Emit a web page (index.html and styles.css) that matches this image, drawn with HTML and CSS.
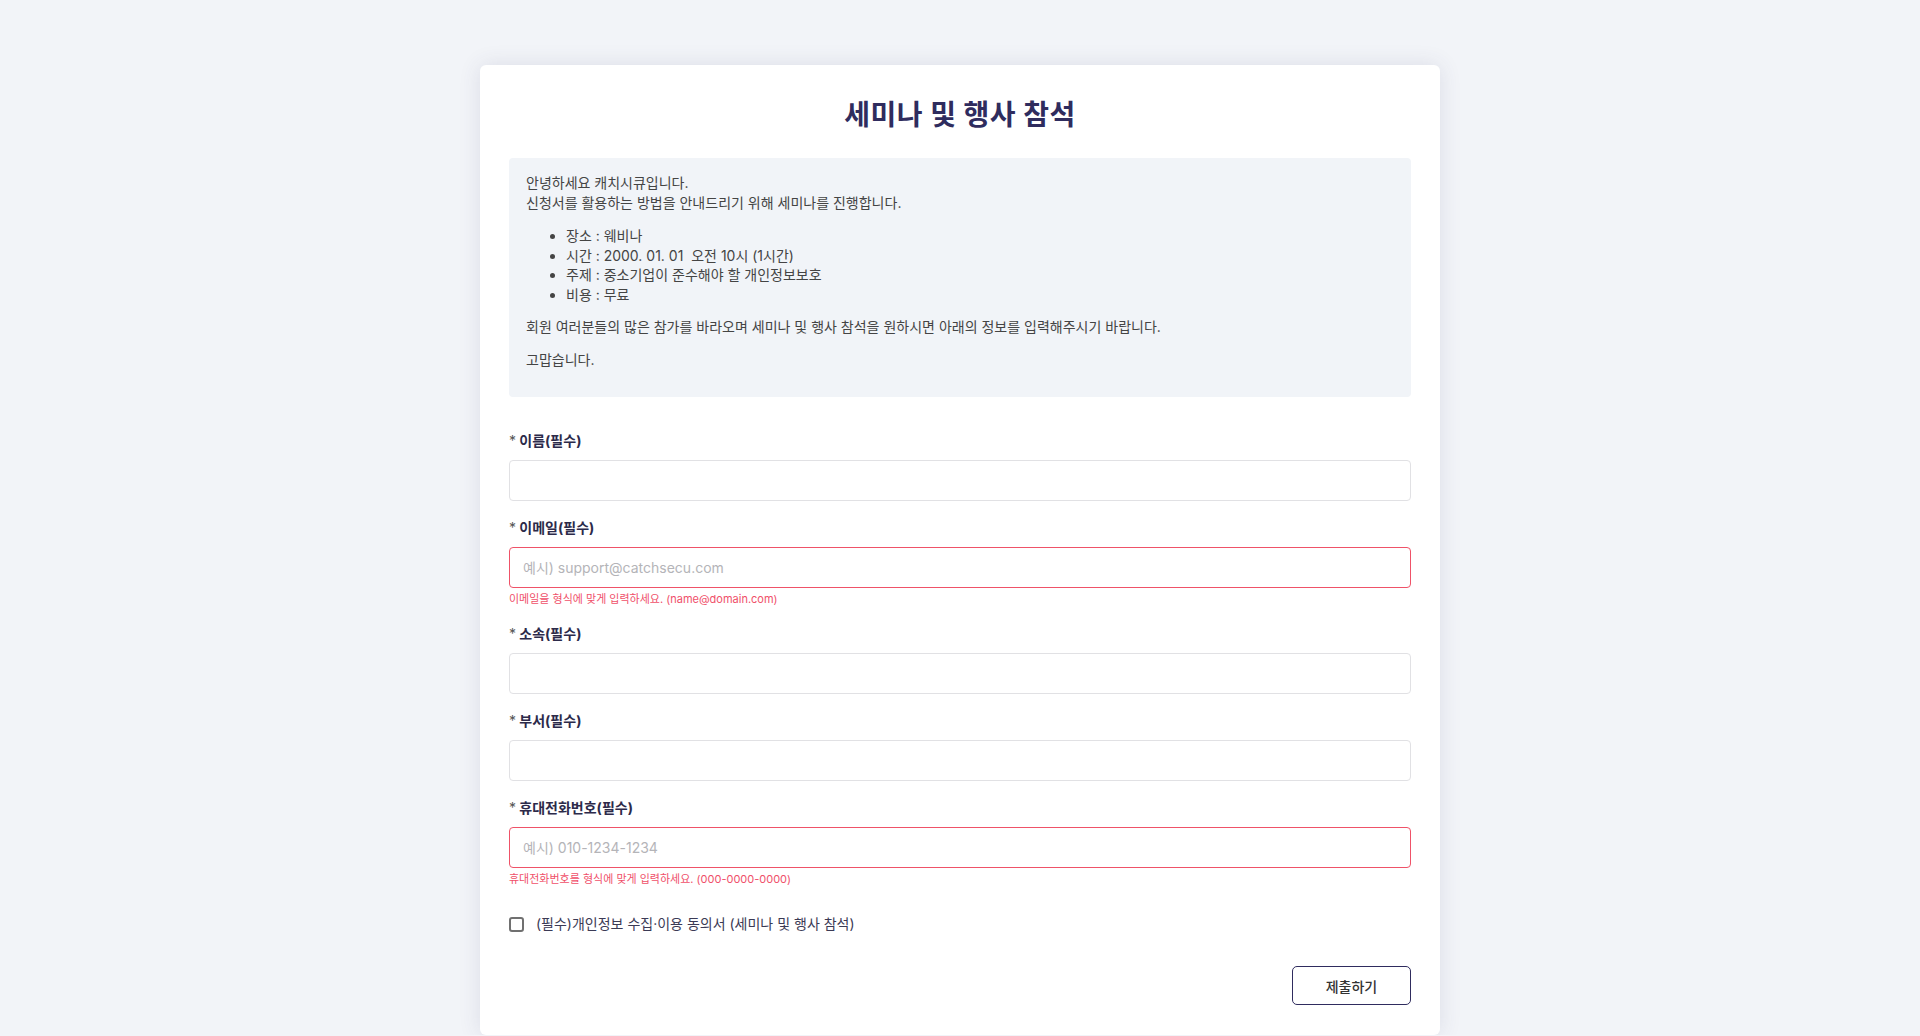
FILE: index.html
```html
<!DOCTYPE html>
<html lang="ko">
  <head>
    <meta charset="UTF-8" />
    <meta name="viewport" content="width=device-width, initial-scale=1.0" />
    <title>세미나 및 행사 참석</title>
    <link rel="stylesheet" href="styles.css">
  </head>
  <body>
    <div class="card">
      <h1 class="title">세미나 및 행사 참석</h1>

      <div class="notice">
        <p>안녕하세요 캐치시큐입니다.<br />신청서를 활용하는 방법을 안내드리기 위해 세미나를 진행합니다.</p>
        <ul>
          <li>장소 : 웨비나</li>
          <li>시간 : 2000. 01. 01 &nbsp;오전 10시 (1시간)</li>
          <li>주제 : 중소기업이 준수해야 할 개인정보보호</li>
          <li>비용 : 무료</li>
        </ul>
        <p>회원 여러분들의 많은 참가를 바라오며 세미나 및 행사 참석을 원하시면 아래의 정보를 입력해주시기 바랍니다.</p>
        <p>고맙습니다.</p>
      </div>

      <form class="form" onsubmit="return false">
        <div class="field">
          <label for="name"><span class="star">*</span> 이름(필수)</label>
          <input id="name" type="text" />
        </div>
        <div class="field invalid">
          <label for="email"><span class="star">*</span> 이메일(필수)</label>
          <input id="email" type="text" placeholder="예시) support@catchsecu.com" />
          <div class="error">이메일을 형식에 맞게 입력하세요. (name@domain.com)</div>
        </div>
        <div class="field">
          <label for="org"><span class="star">*</span> 소속(필수)</label>
          <input id="org" type="text" />
        </div>
        <div class="field">
          <label for="dept"><span class="star">*</span> 부서(필수)</label>
          <input id="dept" type="text" />
        </div>
        <div class="field invalid">
          <label for="phone"><span class="star">*</span> 휴대전화번호(필수)</label>
          <input id="phone" type="text" placeholder="예시) 010-1234-1234" />
          <div class="error">휴대전화번호를 형식에 맞게 입력하세요. (000-0000-0000)</div>
        </div>

        <label class="agree">
          <input type="checkbox" />
          <span>(필수)개인정보 수집·이용 동의서 (세미나 및 행사 참석)</span>
        </label>

        <div class="actions">
          <button type="submit" class="submit">제출하기</button>
        </div>
      </form>
    </div>
  </body>
</html>
```

FILE: styles.css
```css
* {
  box-sizing: border-box;
}

body {
  margin: 0;
  padding-top: 65px;
  background: #f2f4f8;
  font-family: "Inter", "Noto Sans CJK KR", sans-serif;
  color: #444;
}

.card {
  width: 960px;
  margin: 0 auto;
  padding: 35px 29px 30px;
  background: #fff;
  border-radius: 6px;
  box-shadow: 0 0 22px rgba(60, 60, 110, 0.12);
}

.title {
  margin: 0 0 28px;
  font-size: 28px;
  line-height: 30px;
  letter-spacing: 0.5px;
  font-weight: 700;
  text-align: center;
  color: #2f2c5e;
}

.notice {
  padding: 15px 17px 14px;
  background: #f1f4f8;
  border-radius: 4px;
  font-size: 14px;
  line-height: 20px;
  color: #444;
}

.notice p,
.notice ul {
  margin: 13px 0;
}

.notice p:first-child {
  margin-top: 0;
}

.notice ul {
  padding-left: 40px;
  line-height: 19.5px;
}

.form {
  margin-top: 34px;
}

.field {
  margin-bottom: 17px;
}

.field label {
  display: block;
  margin-bottom: 9px;
  font-size: 14px;
  line-height: 20px;
  font-weight: 700;
  color: #2c2a4a;
}

.field .star {
  font-weight: 400;
  color: #555;
}

.field input {
  display: block;
  width: 100%;
  height: 41px;
  padding: 0 13px;
  border: 1px solid #e1e1e4;
  border-radius: 4px;
  font-family: inherit;
  font-size: 14px;
  color: #333;
  outline: none;
}

.field input::placeholder {
  color: #b4b4b8;
}

.field.invalid input {
  border-color: #ef5268;
}

.error {
  margin: 3px 0 5px;
  font-size: 11px;
  line-height: 16px;
  color: #f0506a;
}

.agree {
  display: flex;
  align-items: center;
  gap: 12px;
  margin-top: 27px;
  font-size: 14px;
  line-height: 20px;
  color: #3b3a55;
  cursor: pointer;
}

.agree input {
  appearance: none;
  width: 15px;
  height: 15px;
  margin: 0;
  border: 2px solid #707070;
  border-radius: 3px;
  background: #fff;
  cursor: pointer;
}

.agree input:checked {
  background: #2f2c5e;
  border-color: #2f2c5e;
}

.actions {
  display: flex;
  justify-content: flex-end;
  margin-top: 32px;
}

.submit {
  width: 119px;
  height: 39px;
  background: #fff;
  border: 1px solid #2f2c5e;
  border-radius: 5px;
  font-family: inherit;
  font-size: 14px;
  font-weight: 500;
  color: #333;
  cursor: pointer;
}
```
